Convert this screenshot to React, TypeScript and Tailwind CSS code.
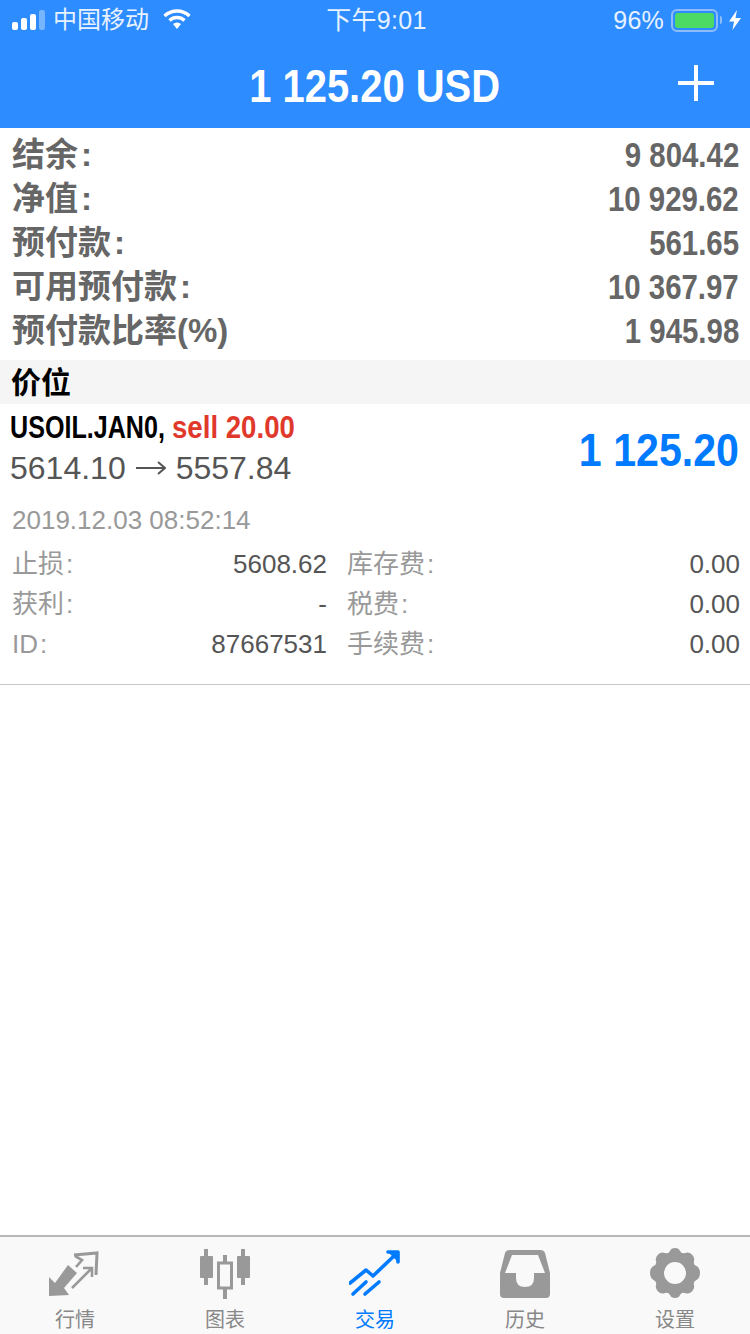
import React from "react";

const sans = "font-['Liberation_Sans','Noto_Sans_CJK_SC',sans-serif]";

const summaryRows = [
  { label: "结余", colon: true, value: "9 804.42" },
  { label: "净值", colon: true, value: "10 929.62" },
  { label: "预付款", colon: true, value: "561.65" },
  { label: "可用预付款", colon: true, value: "10 367.97" },
  { label: "预付款比率(%)", colon: false, value: "1 945.98" },
];

const detailRows = [
  { left: "止损", leftValue: "5608.62", right: "库存费", rightValue: "0.00" },
  { left: "获利", leftValue: "-", right: "税费", rightValue: "0.00" },
  { left: "ID", leftValue: "87667531", right: "手续费", rightValue: "0.00" },
];

const StatusBar = () => (
  <div className="flex h-10 items-center justify-between pl-3 pr-[9px] text-[25px] text-[#e8f2ff]">
    <div className="flex w-[260px] items-center">
      <svg width="33" height="20" viewBox="0 0 33 20" className="mr-2">
        <rect x="0" y="12" width="6" height="8" rx="2" fill="#fff" />
        <rect x="9" y="8" width="6" height="12" rx="2" fill="#fff" />
        <rect x="18" y="4" width="6" height="16" rx="2" fill="#fff" />
        <rect x="27" y="0" width="6" height="20" rx="2" fill="#fff" fillOpacity="0.35" />
      </svg>
      <span className="text-[24px] leading-none">中国移动</span>
      <svg width="28" height="20" viewBox="0 0 28 20" className="ml-[14px] -translate-y-px">
        <path d="M1.5 7 A18 18 0 0 1 26.5 7" fill="none" stroke="#fff" strokeWidth="3.4" />
        <path d="M6.5 11.5 A11 11 0 0 1 21.5 11.5" fill="none" stroke="#fff" strokeWidth="3.4" />
        <path d="M10 15 A6 6 0 0 1 18 15 L14 20 Z" fill="#fff" />
      </svg>
    </div>
    <span className="text-[25px] leading-none tracking-[0.3px]">下午9:01</span>
    <div className="flex w-[260px] items-center justify-end">
      <span className="mr-[-2px] text-[25px] leading-none tracking-[0.2px]">96%</span>
      <div className="ml-[9px] flex h-[23px] w-[47px] items-center rounded-[6px] border-2 border-[#8fbcf8] p-[2px]">
        <div className="h-full w-full rounded-[3px] bg-[#4cd964]" />
      </div>
      <div className="ml-[2px] h-[8px] w-[2px] rounded-r bg-[#8fbcf8]" />
      <svg width="12" height="20" viewBox="0 0 12 20" className="ml-[7px]">
        <path d="M8 0 L0 11.5 H5 L3.5 20 L12 8 H6.5 Z" fill="#fff" />
      </svg>
    </div>
  </div>
);

const MarketIcon = () => (
  <svg width="52" height="48" viewBox="0 0 52 48">
    <path d="M0 27 L6 33 L19 15 L28 23 L15 38 L20 45 L0 46 Z" fill="#999" />
    <path d="M25 5 L48 3 L47 25" fill="none" stroke="#999" strokeWidth="3" />
    <path d="M26 6 L33 10 L27 17" fill="none" stroke="#999" strokeWidth="2.6" />
    <path d="M23 38 L42 19 M34 18 H43 V27" fill="none" stroke="#999" strokeWidth="2.6" />
  </svg>
);

const ChartIcon = () => (
  <svg width="52" height="50" viewBox="0 0 52 50">
    <rect x="5" y="0" width="4" height="36" fill="#999" />
    <rect x="1" y="7" width="13" height="22" rx="1" fill="#999" />
    <rect x="24" y="6" width="4" height="44" fill="#999" />
    <rect x="19.5" y="14" width="13" height="25" fill="#f9f9f9" stroke="#999" strokeWidth="3" />
    <rect x="42" y="0" width="4" height="36" fill="#999" />
    <rect x="38" y="7" width="13" height="22" rx="1" fill="#999" />
  </svg>
);

const TradeIcon = () => (
  <svg width="52" height="48" viewBox="0 0 52 48">
    <g fill="none" stroke="#007aff" strokeWidth="3.6" strokeLinecap="round" strokeLinejoin="round">
      <path d="M1 33 L17 20 L24 26 L46 5" />
      <path d="M4 44 L17 32" />
      <path d="M16 44 L30 32" />
      <path d="M39 2 H49 V12" strokeWidth="3.6" />
    </g>
    <path d="M39 2 H49 V12 Z" fill="#007aff" />
  </svg>
);

const HistoryIcon = () => (
  <svg width="50" height="48" viewBox="0 0 50 48">
    <path
      fillRule="evenodd"
      fill="#999"
      d="M10 0 H40 Q44 0 45 3 L50 23 V44 Q50 48 46 48 H4 Q0 48 0 44 V23 L5 3 Q6 0 10 0 Z M12 5 L5 23 H16 V28 Q16 37 25 37 Q34 37 34 28 V23 H45 L38 5 Z"
    />
  </svg>
);

const SettingsIcon = () => (
  <svg width="50" height="50" viewBox="0 0 50 50" className="-translate-y-px">
    <path
      fillRule="evenodd"
      fill="#999"
      d="M25 0 Q29 0 30 3 Q31.5 6 35 5 Q39 3.5 42 6.5 Q45 10 44 13 Q43 16.5 46.5 18 Q50 20 50 25 Q50 30 46.5 32 Q43 33.5 44 37 Q45 40 42 43.5 Q39 46.5 35 45 Q31.5 44 30 47 Q29 50 25 50 Q21 50 20 47 Q18.5 44 15 45 Q11 46.5 8 43.5 Q5 40 6 37 Q7 33.5 3.5 32 Q0 30 0 25 Q0 20 3.5 18 Q7 16.5 6 13 Q5 10 8 6.5 Q11 3.5 15 5 Q18.5 6 20 3 Q21 0 25 0 Z M25 14 A11 11 0 1 0 25 36 A11 11 0 1 0 25 14 Z"
    />
  </svg>
);

const tabs = [
  { label: "行情", icon: <MarketIcon /> },
  { label: "图表", icon: <ChartIcon /> },
  { label: "交易", icon: <TradeIcon />, active: true },
  { label: "历史", icon: <HistoryIcon /> },
  { label: "设置", icon: <SettingsIcon /> },
];

const App = () => {
  return (
    <div className={`flex h-[1334px] w-[750px] flex-col overflow-hidden bg-white ${sans}`}>
      <div className="h-[128px] bg-[#2d8cff]">
        <StatusBar />
        <div className="relative flex h-[88px] items-center justify-center text-white">
          <span className="inline-block scale-x-[0.85] whitespace-nowrap pt-[2px] text-[47px] font-bold leading-none">
            1 125.20 USD
          </span>
          <div className="absolute left-[678px] top-[25px] h-[36px] w-[36px]">
            <div className="absolute left-[16px] top-0 h-full w-[4px] bg-white" />
            <div className="absolute left-0 top-[16px] h-[4px] w-full bg-white" />
          </div>
        </div>
      </div>

      <div className="flex flex-col pb-2 pl-3 pr-[11px] pt-1 text-[#666]">
        {summaryRows.map((row) => (
          <div key={row.label} className="flex h-11 items-center justify-between font-bold">
            <span className="whitespace-nowrap text-[33px] leading-none">
              {row.label}
              {row.colon && <span className="ml-[3px]">:</span>}
            </span>
            <span className="inline-block origin-right scale-x-[0.84] whitespace-nowrap text-[35px] leading-none">
              {row.value}
            </span>
          </div>
        ))}
      </div>

      <div className="flex h-11 items-center bg-[#f5f5f5] px-[11px] pt-[2px] text-[30px] font-bold leading-none text-black">
        价位
      </div>

      <div className="border-b border-[#c8c8c8] pb-5">
        <div className="flex items-center justify-between pl-[10px] pr-[11px]">
          <div className="flex flex-col">
            <div className="h-[42px] origin-left scale-x-[0.81] whitespace-nowrap pt-[5px] text-[31px] font-bold leading-[37px] text-black">
              USOIL.JAN0,{" "}
              <span className="inline-block origin-left scale-x-[1.1] text-[#e0392b]">sell 20.00</span>
            </div>
            <div className="flex h-[44px] items-center gap-[10px] whitespace-nowrap text-[32px] leading-[44px] text-[#555]">
              <span>5614.10</span>
              <svg width="30" height="16" viewBox="0 0 30 16">
                <path d="M0 8 H29 M22 2 L29 8 L22 14" fill="none" stroke="#555" strokeWidth="2" />
              </svg>
              <span>5557.84</span>
            </div>
          </div>
          <span className="inline-block origin-right translate-y-[2px] scale-x-[0.875] whitespace-nowrap text-[47px] font-bold leading-none text-[#007aff]">
            1 125.20
          </span>
        </div>
        <div className="mt-[9px] h-[45px] pl-3 text-[26px] leading-[42px] text-[#999]">2019.12.03 08:52:14</div>
        <div className="grid grid-cols-[315px_393px] gap-x-5 pl-3 text-[26px]">
          {detailRows.map((row) => (
            <React.Fragment key={row.left}>
              <div className="flex h-10 items-center justify-between leading-none">
                <span className="text-[#999]">
                  {row.left}
                  <span className="ml-[2px]">:</span>
                </span>
                <span className="text-[#555]">{row.leftValue}</span>
              </div>
              <div className="flex h-10 items-center justify-between leading-none">
                <span className="text-[#999]">
                  {row.right}
                  <span className="ml-[2px]">:</span>
                </span>
                <span className="text-[#555]">{row.rightValue}</span>
              </div>
            </React.Fragment>
          ))}
        </div>
      </div>

      <div className="mt-auto flex h-[99px] border-t-2 border-[#b8b8b8] bg-[#f9f9f9]">
        {tabs.map((tab) => (
          <div key={tab.label} className="flex flex-1 flex-col items-center pt-[12px]">
            <div className="flex h-[50px] items-center">{tab.icon}</div>
            <span
              className={`mt-[8px] text-[20px] leading-[26px] ${tab.active ? "text-[#007aff]" : "text-[#888]"}`}
            >
              {tab.label}
            </span>
          </div>
        ))}
      </div>
    </div>
  );
};

export default App;
